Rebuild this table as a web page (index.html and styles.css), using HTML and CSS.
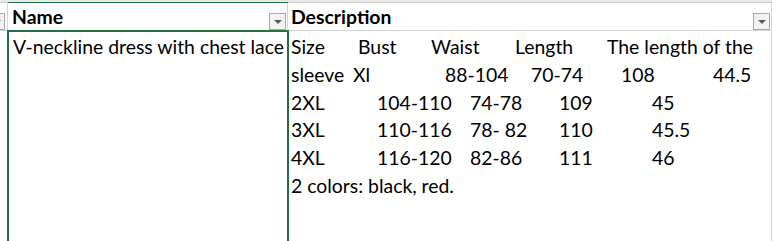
FILE: index.html
```html
<!DOCTYPE html>
<html lang="en">
<head>
<meta charset="utf-8">
<title>Products</title>
<link rel="stylesheet" href="styles.css">
</head>
<body>
<div class="sheet">
  <div class="colheads">
    <div class="ch ch-a"></div>
    <div class="ch ch-b"></div>
    <div class="ch ch-c"></div>
  </div>
  <div class="row head">
    <div class="cell a"><span class="filter"></span></div>
    <div class="cell b"><span class="label">Name</span><span class="filter"></span></div>
    <div class="cell c"><span class="label">Description</span><span class="filter"></span></div>
  </div>
  <div class="row data">
    <div class="cell a"></div>
    <div class="cell b selected"><div class="line">V-neckline dress with chest lace</div></div>
    <div class="cell c">
      <div class="line cols l1"><span>Size</span><span>Bust</span><span>Waist</span><span>Length</span><span>The length of the</span></div>
      <div class="line cols l2"><span>sleeve</span><span>Xl</span><span>88-104</span><span>70-74</span><span>108</span><span>44.5</span></div>
      <div class="line cols lt"><span>2XL</span><span>104-110</span><span>74-78</span><span>109</span><span>45</span></div>
      <div class="line cols lt"><span>3XL</span><span>110-116</span><span>78- 82</span><span>110</span><span>45.5</span></div>
      <div class="line cols lt"><span>4XL</span><span>116-120</span><span>82-86</span><span>111</span><span>46</span></div>
      <div class="line">2 colors: black, red.</div>
    </div>
  </div>
</div>
</body>
</html>
```

FILE: styles.css
```css
* { box-sizing: border-box; }

html, body {
  margin: 0;
  padding: 0;
  background: #ffffff;
}

body {
  width: 772px;
  height: 241px;
  overflow: hidden;
  font-family: Lato, "Liberation Sans", sans-serif;
  font-size: 19.4px;
  color: #000;
}

.sheet {
  display: grid;
  grid-template-columns: 8px 280px 1fr;
  grid-template-rows: 3px 28px 1fr;
  height: 241px;
}

/* column header strip at the top */
.colheads {
  display: contents;
}
.ch {
  background: #e9e9e9;
  border-bottom: 1px solid #c8c8c8;
}
.ch-b {
  border-bottom: 1px solid #217346;
}

.row {
  display: contents;
}

.cell {
  position: relative;
  border-right: 1px solid #d4d4d4;
}

.head .cell {
  border-bottom: 1px solid #d4d4d4;
  display: flex;
  align-items: center;
  padding-left: 3px;
}

.head .label {
  font-weight: 700;
  line-height: 1;
}

.head .cell.b { padding-left: 4px; }
.head .cell.c { padding-left: 3px; }

.filter {
  position: absolute;
  right: 1px;
  bottom: 0;
  width: 17px;
  height: 17px;
  border: 1px solid #a9a9a9;
  background: #f2f2f2;
}
.filter::after {
  content: "";
  position: absolute;
  left: 4px;
  top: 6px;
  border-left: 4px solid transparent;
  border-right: 4px solid transparent;
  border-top: 4px solid #595959;
}
.head .cell.a .filter {
  right: 2px;
  width: 17px;
}
.head .cell.a { overflow: hidden; }

.data .cell.b {
  border: 2px solid #217346;
  border-bottom: none;
  margin-top: -1px;
  margin-left: -1px;
  margin-right: -1px;
  padding-left: 4px;
  padding-top: 1px;
}

.data .cell.c {
  padding-left: 3px;
  padding-top: 2px;
}

.line {
  height: 27.8px;
  line-height: 27.8px;
  white-space: nowrap;
}

.cols { display: grid; }
.l1 { grid-template-columns: 67px 73px 84px 92px auto; }
.l2 { grid-template-columns: 62px 92px 86px 90px 92px auto; }
.lt { grid-template-columns: 86px 93px 89px 93px auto; }
```
